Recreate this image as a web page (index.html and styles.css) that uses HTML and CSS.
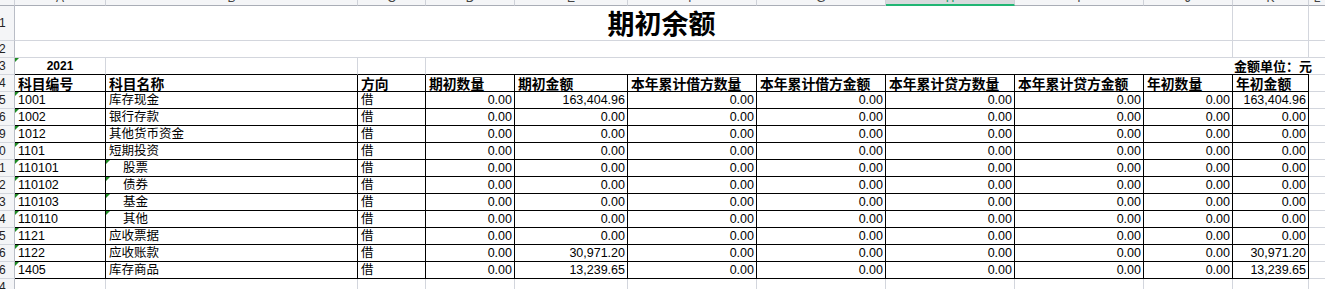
FILE: index.html
```html
<!DOCTYPE html>
<html lang="zh-CN">
<head>
<meta charset="utf-8">
<title>期初余额</title>
<link rel="stylesheet" href="styles.css">
</head>
<body>
<div class="sheet">
  <div class="ch"></div>
  <div class="ch"><span>A</span></div>
  <div class="ch"><span>B</span></div>
  <div class="ch"><span>C</span></div>
  <div class="ch"><span>D</span></div>
  <div class="ch"><span>E</span></div>
  <div class="ch"><span>F</span></div>
  <div class="ch"><span>G</span></div>
  <div class="ch sel"><span>H</span></div>
  <div class="ch"><span>I</span></div>
  <div class="ch"><span>J</span></div>
  <div class="ch"><span>K</span></div>
  <div class="ch last"><span>L</span></div>

  <div class="rh"><span>1</span></div>
  <div class="c span10 title">期初余额</div>
  <div class="c"></div>
  <div class="c last"></div>

  <div class="rh"><span>2</span></div>
  <div class="c span10"></div>
  <div class="c"></div>
  <div class="c last"></div>

  <div class="rh"><span>3</span></div>
  <div class="c top tri year">2021</div>
  <div class="c top"></div>
  <div class="c top"></div>
  <div class="c top span7 nob"></div>
  <div class="c top nob unit">金额单位：元</div>
  <div class="c last"></div>

  <div class="rh"><span>4</span></div>
  <div class="c t h">科目编号</div>
  <div class="c t h">科目名称</div>
  <div class="c t h">方向</div>
  <div class="c t h">期初数量</div>
  <div class="c t h">期初金额</div>
  <div class="c t h">本年累计借方数量</div>
  <div class="c t h">本年累计借方金额</div>
  <div class="c t h">本年累计贷方数量</div>
  <div class="c t h">本年累计贷方金额</div>
  <div class="c t h">年初数量</div>
  <div class="c t h">年初金额</div>
  <div class="c last"></div>

  <div class="rh"><span>5</span></div>
  <div class="c t tri">1001</div>
  <div class="c t">库存现金</div>
  <div class="c t">借</div>
  <div class="c t n">0.00</div>
  <div class="c t n">163,404.96</div>
  <div class="c t n">0.00</div>
  <div class="c t n">0.00</div>
  <div class="c t n">0.00</div>
  <div class="c t n">0.00</div>
  <div class="c t n">0.00</div>
  <div class="c t n">163,404.96</div>
  <div class="c last"></div>

  <div class="rh"><span>6</span></div>
  <div class="c t tri">1002</div>
  <div class="c t">银行存款</div>
  <div class="c t">借</div>
  <div class="c t n">0.00</div>
  <div class="c t n">0.00</div>
  <div class="c t n">0.00</div>
  <div class="c t n">0.00</div>
  <div class="c t n">0.00</div>
  <div class="c t n">0.00</div>
  <div class="c t n">0.00</div>
  <div class="c t n">0.00</div>
  <div class="c last"></div>

  <div class="rh"><span>9</span></div>
  <div class="c t tri">1012</div>
  <div class="c t">其他货币资金</div>
  <div class="c t">借</div>
  <div class="c t n">0.00</div>
  <div class="c t n">0.00</div>
  <div class="c t n">0.00</div>
  <div class="c t n">0.00</div>
  <div class="c t n">0.00</div>
  <div class="c t n">0.00</div>
  <div class="c t n">0.00</div>
  <div class="c t n">0.00</div>
  <div class="c last"></div>

  <div class="rh"><span>0</span></div>
  <div class="c t tri">1101</div>
  <div class="c t">短期投资</div>
  <div class="c t">借</div>
  <div class="c t n">0.00</div>
  <div class="c t n">0.00</div>
  <div class="c t n">0.00</div>
  <div class="c t n">0.00</div>
  <div class="c t n">0.00</div>
  <div class="c t n">0.00</div>
  <div class="c t n">0.00</div>
  <div class="c t n">0.00</div>
  <div class="c last"></div>

  <div class="rh"><span>1</span></div>
  <div class="c t tri">110101</div>
  <div class="c t tri ind">股票</div>
  <div class="c t">借</div>
  <div class="c t n">0.00</div>
  <div class="c t n">0.00</div>
  <div class="c t n">0.00</div>
  <div class="c t n">0.00</div>
  <div class="c t n">0.00</div>
  <div class="c t n">0.00</div>
  <div class="c t n">0.00</div>
  <div class="c t n">0.00</div>
  <div class="c last"></div>

  <div class="rh"><span>2</span></div>
  <div class="c t tri">110102</div>
  <div class="c t tri ind">债券</div>
  <div class="c t">借</div>
  <div class="c t n">0.00</div>
  <div class="c t n">0.00</div>
  <div class="c t n">0.00</div>
  <div class="c t n">0.00</div>
  <div class="c t n">0.00</div>
  <div class="c t n">0.00</div>
  <div class="c t n">0.00</div>
  <div class="c t n">0.00</div>
  <div class="c last"></div>

  <div class="rh"><span>3</span></div>
  <div class="c t tri">110103</div>
  <div class="c t tri ind">基金</div>
  <div class="c t">借</div>
  <div class="c t n">0.00</div>
  <div class="c t n">0.00</div>
  <div class="c t n">0.00</div>
  <div class="c t n">0.00</div>
  <div class="c t n">0.00</div>
  <div class="c t n">0.00</div>
  <div class="c t n">0.00</div>
  <div class="c t n">0.00</div>
  <div class="c last"></div>

  <div class="rh"><span>4</span></div>
  <div class="c t tri">110110</div>
  <div class="c t tri ind">其他</div>
  <div class="c t">借</div>
  <div class="c t n">0.00</div>
  <div class="c t n">0.00</div>
  <div class="c t n">0.00</div>
  <div class="c t n">0.00</div>
  <div class="c t n">0.00</div>
  <div class="c t n">0.00</div>
  <div class="c t n">0.00</div>
  <div class="c t n">0.00</div>
  <div class="c last"></div>

  <div class="rh"><span>5</span></div>
  <div class="c t tri">1121</div>
  <div class="c t">应收票据</div>
  <div class="c t">借</div>
  <div class="c t n">0.00</div>
  <div class="c t n">0.00</div>
  <div class="c t n">0.00</div>
  <div class="c t n">0.00</div>
  <div class="c t n">0.00</div>
  <div class="c t n">0.00</div>
  <div class="c t n">0.00</div>
  <div class="c t n">0.00</div>
  <div class="c last"></div>

  <div class="rh"><span>6</span></div>
  <div class="c t tri">1122</div>
  <div class="c t">应收账款</div>
  <div class="c t">借</div>
  <div class="c t n">0.00</div>
  <div class="c t n">30,971.20</div>
  <div class="c t n">0.00</div>
  <div class="c t n">0.00</div>
  <div class="c t n">0.00</div>
  <div class="c t n">0.00</div>
  <div class="c t n">0.00</div>
  <div class="c t n">30,971.20</div>
  <div class="c last"></div>

  <div class="rh"><span>6</span></div>
  <div class="c t tri">1405</div>
  <div class="c t">库存商品</div>
  <div class="c t">借</div>
  <div class="c t n">0.00</div>
  <div class="c t n">13,239.65</div>
  <div class="c t n">0.00</div>
  <div class="c t n">0.00</div>
  <div class="c t n">0.00</div>
  <div class="c t n">0.00</div>
  <div class="c t n">0.00</div>
  <div class="c t n">13,239.65</div>
  <div class="c last"></div>

  <div class="rh"><span>4</span></div>
  <div class="c"></div>
  <div class="c"></div>
  <div class="c"></div>
  <div class="c"></div>
  <div class="c"></div>
  <div class="c"></div>
  <div class="c"></div>
  <div class="c"></div>
  <div class="c"></div>
  <div class="c"></div>
  <div class="c"></div>
  <div class="c last"></div>
</div>
</body>
</html>
```

FILE: styles.css
```css
* {
  box-sizing: border-box;
}

html,
body {
  margin: 0;
  padding: 0;
  background: #fff;
  overflow: hidden;
}

body {
  font-family: "Liberation Sans", "Noto Sans CJK SC", sans-serif;
  color: #000;
}

.sheet {
  display: grid;
  grid-template-columns: 15px 91px 252px 68px 89px 113px 129px 129px 129px 129px 89px 76px 1fr;
  grid-template-rows: 6px 35px repeat(15, 17px);
  width: 1325px;
  height: 289px;
  overflow: hidden;
}

/* column header strip */
.ch {
  background: #f4f5f7;
  border-right: 1px solid #cfd2d9;
  border-bottom: 1px solid #a9adb6;
  overflow: hidden;
  text-align: center;
  font-size: 12px;
  color: #444;
}

.ch span {
  display: block;
  line-height: 17px;
  margin-top: -10px;
}

.ch.sel {
  background: #d8dadd;
  border-bottom: 2px solid #21b574;
  color: #1a9c62;
}

.ch.last {
  border-right: none;
}

/* row header */
.rh {
  background: #f4f5f7;
  border-right: 1px solid #b9bdc6;
  border-bottom: 1px solid #d3d6dd;
  overflow: hidden;
  font-size: 12px;
  white-space: nowrap;
  display: flex;
  align-items: center;
  color: #222;
}

.rh span {
  margin-left: -1px;
}

/* cells */
.c {
  position: relative;
  border-right: 1px solid #d3d6dd;
  border-bottom: 1px solid #d3d6dd;
  font-size: 12.5px;
  line-height: 16px;
  padding: 0 2px 0 3px;
  white-space: nowrap;
  overflow: hidden;
}

.c.last {
  border-right: none;
}

.t {
  border-right-color: #000;
  border-bottom-color: #000;
}

.top {
  border-bottom-color: #000;
}

.nob {
  border-right: none;
}

.span10 {
  grid-column: span 10;
}

.span7 {
  grid-column: span 7;
}

.n {
  text-align: right;
}

.h {
  font-family: "Noto Sans CJK SC", sans-serif;
  font-weight: 700;
  font-size: 13.8px;
  line-height: 16px;
}

.ind {
  padding-left: 17px;
}

.tri::before {
  content: "";
  position: absolute;
  left: 0;
  top: 0;
  border-top: 4px solid #1e8c23;
  border-right: 4px solid transparent;
}

.title {
  font-family: "Noto Sans CJK SC", sans-serif;
  font-size: 27px;
  font-weight: 700;
  line-height: 34px;
  text-align: center;
  padding: 0 0 0 76px;
}

.year {
  font-weight: 700;
  font-size: 12px;
  text-align: center;
  padding: 0;
}

.unit {
  overflow: visible;
  font-family: "Noto Sans CJK SC", sans-serif;
  font-weight: 700;
  font-size: 13px;
  padding: 0 0 0 1px;
  z-index: 1;
}
```
